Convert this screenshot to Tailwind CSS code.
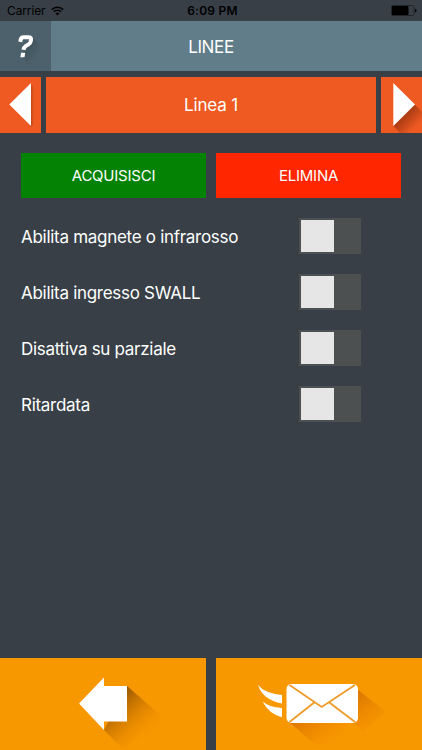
<!DOCTYPE html>
<html lang="it">
<head>
<meta charset="utf-8">
<meta name="viewport" content="width=device-width, initial-scale=1">
<title>Linee</title>
<script src="https://cdn.jsdelivr.net/npm/@tailwindcss/browser@4"></script>
</head>
<body class="bg-[#383f47] font-['Inter',sans-serif] text-white">
<div class="flex h-[750px] w-[422px] flex-col overflow-hidden">
  <div class="grid h-[21px] shrink-0 grid-cols-3 items-center text-black">
    <div class="flex items-center gap-[5px] pl-[7px]">
      <span class="pt-px text-[12px] leading-none tracking-[-0.01em]">Carrier</span>
      <svg class="h-[10px] w-[13px]" viewBox="0 0 13 10" fill="none" stroke="#000" stroke-width="1.6"><path d="M.8 3.6a8.2 8.2 0 0 1 11.4 0M2.8 5.8a5.3 5.3 0 0 1 7.4 0"/><path d="M4.5 7.4a3 3 0 0 1 4 0L6.500 9.400Z" fill="#000" stroke="none"/></svg>
    </div>
    <span class="pt-px pl-[3px] text-center text-[12px] leading-none font-semibold tracking-[0.02em]">6:09 PM</span>
    <svg class="mr-[5px] h-[11px] w-[26px] justify-self-end" viewBox="0 0 26 11"><rect x=".5" y=".5" width="22.500" height="10" rx="1.500" fill="none" stroke="#20252a"/><rect x="1" y="1" width="16.500" height="9" rx=".8"/><path d="M24 3.700q1.500.3 1.500 1.800T24 7.300Z"/></svg>
  </div>
  <header class="flex h-[50px] shrink-0 bg-[#617d8a]">
    <button class="h-full w-[51px] bg-[#4c616b]" aria-label="Aiuto">
      <svg class="h-[50px] w-[51px]" viewBox="0 0 51 50">
        <defs><linearGradient id="hs" x1="0" y1="0" x2="1" y2="1"><stop offset=".2" stop-color="#26343b" stop-opacity=".4"/><stop offset=".65" stop-color="#26343b" stop-opacity="0"/></linearGradient></defs>
        <path d="M32 16 44 28 32 47 21 35Z" fill="url(#hs)"/>
        <path d="M20.300 20.800 20.700 18.500Q21.200 16.200 23.400 16.200H28.600Q31.400 16.200 31 18.700L30.700 20.400Q30.300 22.300 28.500 23.400L25.600 25.100Q24 26.100 23.500 28.900" fill="none" stroke="#fff" stroke-width="4"/>
        <path d="M21.100 31.800h4.100l-.7 4.400h-4.100Z" fill="#fff"/>
      </svg>
    </button>
    <h1 class="flex flex-1 items-center justify-center pt-[3px] pr-[51px] text-[17px] tracking-[-0.02em]">LINEE</h1>
  </header>
  <nav class="mt-[6px] flex h-[56px] shrink-0 gap-[5px] text-[17px]">
    <button class="w-[41px] bg-[#ee5a22]" aria-label="Precedente">
      <svg class="h-[56px] w-[41px]" viewBox="0 0 41 56"><defs><linearGradient id="ls"><stop stop-color="#8b2d0c" stop-opacity=".6"/><stop offset="1" stop-color="#8b2d0c" stop-opacity="0"/></linearGradient></defs><path d="M30 6 34 10V48L30 50Z" fill="url(#ls)"/><path d="M31 6V49L9.300 27.500Z" fill="#fff"/></svg>
    </button>
    <div class="flex w-[330px] items-center justify-center bg-[#ee5a22] pt-[2px] tracking-[-0.01em]">Linea 1</div>
    <button class="w-[41px] bg-[#ee5a22]" aria-label="Successiva">
      <svg class="h-[56px] w-[41px]" viewBox="0 0 41 56"><defs><linearGradient id="rs" gradientUnits="userSpaceOnUse" x1="23" y1="38" x2="35" y2="50"><stop stop-color="#8b2d0c" stop-opacity=".7"/><stop offset="1" stop-color="#8b2d0c" stop-opacity="0"/></linearGradient></defs><path d="M33.500 27.500 41 35V56H19L12.500 49Z" fill="url(#rs)"/><path d="M12.300 6V49L34 27.500Z" fill="#fff"/></svg>
    </button>
  </nav>
  <main class="flex flex-1 flex-col px-[21px] pt-[20px]">
    <div class="flex h-[45px] gap-[10px] text-[15px] tracking-[-0.015em]">
      <button class="w-[185px] bg-[#048204] pt-[2px]">ACQUISISCI</button>
      <button class="w-[185px] bg-[#ff2600] pt-[2px]">ELIMINA</button>
    </div>
    <div class="mt-[10px] text-[17px] tracking-[-0.017em]">
      <div class="flex h-[56px] items-center justify-between pr-[40px]"><span class="pt-[3px]">Abilita magnete o infrarosso</span><span class="flex h-[36px] w-[62px] bg-[#4c5050] p-[2px]"><i class="h-[32px] w-[33px] bg-[#e6e6e7]"></i></span></div>
      <div class="flex h-[56px] items-center justify-between pr-[40px]"><span class="pt-[3px]">Abilita ingresso SWALL</span><span class="flex h-[36px] w-[62px] bg-[#4c5050] p-[2px]"><i class="h-[32px] w-[33px] bg-[#e6e6e7]"></i></span></div>
      <div class="flex h-[56px] items-center justify-between pr-[40px]"><span class="pt-[3px]">Disattiva su parziale</span><span class="flex h-[36px] w-[62px] bg-[#4c5050] p-[2px]"><i class="h-[32px] w-[33px] bg-[#e6e6e7]"></i></span></div>
      <div class="flex h-[56px] items-center justify-between pr-[40px]"><span class="pt-[3px]">Ritardata</span><span class="flex h-[36px] w-[62px] bg-[#4c5050] p-[2px]"><i class="h-[32px] w-[33px] bg-[#e6e6e7]"></i></span></div>
    </div>
  </main>
  <footer class="flex h-[92px] shrink-0 gap-[10px]">
    <button class="w-[206px] bg-[#f89800]" aria-label="Indietro">
      <svg class="h-[92px] w-[206px]" viewBox="0 0 206 92">
        <defs><linearGradient id="bs" gradientUnits="userSpaceOnUse" x1="114" y1="42" x2="146" y2="76"><stop stop-color="#884d00" stop-opacity=".85"/><stop offset=".4" stop-color="#a95e00" stop-opacity=".5"/><stop offset="1" stop-color="#d87900" stop-opacity="0"/></linearGradient></defs>
        <path d="M127 28 190 83V92H124L104 72Z" fill="url(#bs)"/>
        <path d="M79 45.500 104 19.500V28H127V63.500H104V72Z" fill="#fff"/>
      </svg>
    </button>
    <button class="w-[206px] bg-[#f89800]" aria-label="Invia">
      <svg class="h-[92px] w-[206px]" viewBox="0 0 206 92">
        <defs><linearGradient id="ms" gradientUnits="userSpaceOnUse" x1="132" y1="38" x2="158" y2="72"><stop stop-color="#d06a00" stop-opacity=".8"/><stop offset="1" stop-color="#ec8300" stop-opacity=".1"/></linearGradient><linearGradient id="mt" gradientUnits="userSpaceOnUse" x1="85" y1="60" x2="106" y2="88"><stop stop-color="#d87000" stop-opacity=".8"/><stop offset="1" stop-color="#ec8300" stop-opacity=".1"/></linearGradient></defs>
        <path d="M141 31 170 54 147 73 134 62Z" fill="url(#ms)"/><path d="M73 64 101 88 122 82 132 64Z" fill="url(#mt)"/>
        <rect x="70.500" y="26" width="71.500" height="39" rx="5" fill="#fff"/>
        <path d="M73.500 27 105.700 49 139 27M73.500 64 98.500 44.200M139 64 113 44.200" fill="none" stroke="#ee9b2a" stroke-width="1.800"/>
        <path d="M42 27Q48 35 66 37V45.500Q47 42 42 27ZM46.500 43.500Q53 49 66 50V59.200Q53 56 46.500 43.500Z" fill="#fff"/>
      </svg>
    </button>
  </footer>
</div>
</body>
</html>
